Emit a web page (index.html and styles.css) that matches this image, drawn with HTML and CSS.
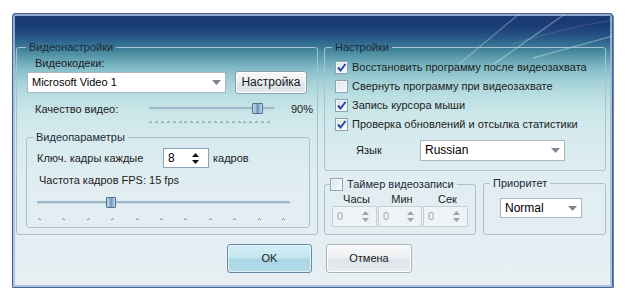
FILE: index.html
```html
<!DOCTYPE html>
<html>
<head>
<meta charset="utf-8">
<link rel="stylesheet" href="styles.css">
</head>
<body>
<div class="window">
  <svg class="glare" width="600" height="90" viewBox="0 0 600 90">
    <path d="M446 50 L506 0" stroke="rgba(255,255,255,0.26)" stroke-width="1.5" fill="none"/>
    <path d="M478 52 L552 0" stroke="rgba(255,255,255,0.32)" stroke-width="1.5" fill="none"/>
    <path d="M520 44 Q560 33 600 22" stroke="rgba(255,255,255,0.3)" stroke-width="1.5" fill="none"/>
    <path d="M500 30 Q550 14 600 6" stroke="rgba(255,255,255,0.14)" stroke-width="1" fill="none"/>
  </svg>
  <div class="groups">
    <fieldset class="group video">
      <legend>Видеонастройки</legend>
      <div class="codec-label">Видеокодеки:</div>
      <div class="codec-row">
        <div class="combo codec-combo"><span>Microsoft Video 1</span><svg class="arrow" width="9" height="5"><path d="M0 0H9L4.5 5Z" fill="#7b8894"/></svg></div>
        <button class="btn setup">Настройка</button>
      </div>
      <div class="quality-row">
        <span>Качество видео:</span>
        <div class="slider">
          <div class="track"></div>
          <div class="thumb quality-thumb"></div>
        </div>
        <span class="pct">90%</span>
      </div>
      <svg class="ticks quality-ticks" width="124" height="3">
        <path fill="#7e8e9c" d="M0 2h1v1h-1zm1 -1h1v1h-1zm1 1h1v1h-1z M6 2h1v1h-1zm1 -1h1v1h-1zm1 1h1v1h-1z M12 2h1v1h-1zm1 -1h1v1h-1zm1 1h1v1h-1z M18 2h1v1h-1zm1 -1h1v1h-1zm1 1h1v1h-1z M24 2h1v1h-1zm1 -1h1v1h-1zm1 1h1v1h-1z M30 2h1v1h-1zm1 -1h1v1h-1zm1 1h1v1h-1z M35 2h1v1h-1zm1 -1h1v1h-1zm1 1h1v1h-1z M41 2h1v1h-1zm1 -1h1v1h-1zm1 1h1v1h-1z M47 2h1v1h-1zm1 -1h1v1h-1zm1 1h1v1h-1z M53 2h1v1h-1zm1 -1h1v1h-1zm1 1h1v1h-1z M59 2h1v1h-1zm1 -1h1v1h-1zm1 1h1v1h-1z M65 2h1v1h-1zm1 -1h1v1h-1zm1 1h1v1h-1z M71 2h1v1h-1zm1 -1h1v1h-1zm1 1h1v1h-1z M77 2h1v1h-1zm1 -1h1v1h-1zm1 1h1v1h-1z M83 2h1v1h-1zm1 -1h1v1h-1zm1 1h1v1h-1z M89 2h1v1h-1zm1 -1h1v1h-1zm1 1h1v1h-1z M94 2h1v1h-1zm1 -1h1v1h-1zm1 1h1v1h-1z M100 2h1v1h-1zm1 -1h1v1h-1zm1 1h1v1h-1z M106 2h1v1h-1zm1 -1h1v1h-1zm1 1h1v1h-1z M112 2h1v1h-1zm1 -1h1v1h-1zm1 1h1v1h-1z M118 2h1v1h-1zm1 -1h1v1h-1zm1 1h1v1h-1z"/>
      </svg>
      <fieldset class="group params">
        <legend>Видеопараметры</legend>
        <div class="key-row">
          <span class="key-label">Ключ. кадры каждые</span>
          <div class="spin"><span>8</span><svg class="spin-arrows" width="7" height="11"><path d="M0 4L3.5 0L7 4Z M0 7H7L3.5 11Z" fill="#111"/></svg></div>
          <span class="unit">кадров</span>
        </div>
        <div class="fps-label">Частота кадров FPS: 15 fps</div>
        <div class="slider fps-slider">
          <div class="track"></div>
          <div class="thumb fps-thumb"></div>
        </div>
        <svg class="ticks fps-ticks" width="248" height="3">
          <path fill="#7e8e9c" d="M0 2h1v1h-1zm1 -1h1v1h-1zm1 1h1v1h-1z M24 2h1v1h-1zm1 -1h1v1h-1zm1 1h1v1h-1z M49 2h1v1h-1zm1 -1h1v1h-1zm1 1h1v1h-1z M73 2h1v1h-1zm1 -1h1v1h-1zm1 1h1v1h-1z M98 2h1v1h-1zm1 -1h1v1h-1zm1 1h1v1h-1z M122 2h1v1h-1zm1 -1h1v1h-1zm1 1h1v1h-1z M146 2h1v1h-1zm1 -1h1v1h-1zm1 1h1v1h-1z M171 2h1v1h-1zm1 -1h1v1h-1zm1 1h1v1h-1z M195 2h1v1h-1zm1 -1h1v1h-1zm1 1h1v1h-1z M220 2h1v1h-1zm1 -1h1v1h-1zm1 1h1v1h-1z M244 2h1v1h-1zm1 -1h1v1h-1zm1 1h1v1h-1z"/>
        </svg>
      </fieldset>
    </fieldset>

    <div class="right">
      <fieldset class="group settings">
        <legend>Настройки</legend>
        <div class="checks">
          <div class="check-row"><span class="checkbox"><svg width="11" height="11"><path d="M2 5.5L4.5 8.5L9.5 2" stroke="#2346a8" stroke-width="2" fill="none"/></svg></span><span>Восстановить программу после видеозахвата</span></div>
          <div class="check-row"><span class="checkbox"></span><span>Свернуть программу при видеозахвате</span></div>
          <div class="check-row"><span class="checkbox"><svg width="11" height="11"><path d="M2 5.5L4.5 8.5L9.5 2" stroke="#2346a8" stroke-width="2" fill="none"/></svg></span><span>Запись курсора мыши</span></div>
          <div class="check-row"><span class="checkbox"><svg width="11" height="11"><path d="M2 5.5L4.5 8.5L9.5 2" stroke="#2346a8" stroke-width="2" fill="none"/></svg></span><span>Проверка обновлений и отсылка статистики</span></div>
        </div>
        <div class="lang-row">
          <span>Язык</span>
          <div class="combo lang-combo"><span>Russian</span><svg class="arrow" width="9" height="5"><path d="M0 0H9L4.5 5Z" fill="#7b8894"/></svg></div>
        </div>
      </fieldset>
      <div class="bottom-groups">
        <fieldset class="group timer">
          <legend><span class="checkbox"></span><span>Таймер видеозаписи</span></legend>
          <div class="time-labels"><span>Часы</span><span>Мин</span><span>Сек</span></div>
          <div class="time-spins">
            <div class="spin disabled"><span>0</span><svg class="spin-arrows" width="7" height="11"><path d="M0 4L3.5 0L7 4Z M0 7H7L3.5 11Z" fill="#98a4ae"/></svg></div>
            <div class="spin disabled"><span>0</span><svg class="spin-arrows" width="7" height="11"><path d="M0 4L3.5 0L7 4Z M0 7H7L3.5 11Z" fill="#98a4ae"/></svg></div>
            <div class="spin disabled"><span>0</span><svg class="spin-arrows" width="7" height="11"><path d="M0 4L3.5 0L7 4Z M0 7H7L3.5 11Z" fill="#98a4ae"/></svg></div>
          </div>
        </fieldset>
        <fieldset class="group priority">
          <legend>Приоритет</legend>
          <div class="combo prio-combo"><span>Normal</span><svg class="arrow" width="9" height="5"><path d="M0 0H9L4.5 5Z" fill="#7b8894"/></svg></div>
        </fieldset>
      </div>
    </div>
  </div>
  <div class="buttons">
    <button class="btn ok">OK</button>
    <button class="btn cancel">Отмена</button>
  </div>
</div>
</body>
</html>
```

FILE: styles.css
```css
* { box-sizing: border-box; }

body {
  margin: 0;
  background: #ffffff;
  font: 11px/13px "Liberation Sans", Arial, sans-serif;
  color: #1c1c1c;
}

.window {
  position: relative;
  margin: 13px 0 0 12px;
  width: 601px;
  height: 275px;
  border: 1px solid #425f98;
  border-radius: 3px 3px 1px 1px;
  box-shadow: inset 0 0 0 2px rgba(165, 188, 216, 0.85), 1px 1px 0 #6d86b2;
  padding: 27px 6px 0 3px;
  overflow: hidden;
  background: linear-gradient(180deg,
    #1a3872 0px, #1c3d77 12px, #245182 21px, #316b90 29px,
    #45869d 37px, #62a1b1 45px, #84bdc7 55px, #a2d0d6 67px,
    #bbdfe2 82px, #cce6e9 100px, #d8ebef 130px, #e1edf1 170px, #e7eff3 273px);
}

.glare {
  position: absolute;
  left: 0;
  top: 0;
  pointer-events: none;
}

.groups {
  position: relative;
  display: grid;
  grid-template-columns: 302px 282px;
  column-gap: 6px;
  height: 194px;
}

.group {
  margin: 0;
  padding: 0;
  min-width: 0;
  border: 1px solid #a7c3cf;
  border-radius: 3px;
}

.group > legend {
  margin-left: 9px;
  padding: 0 3px;
  line-height: 13px;
  color: #1c2a3a;
}

/* left group */
.video { height: 194px; }

.codec-label { margin: 3px 0 0 18px; }

.codec-row {
  display: flex;
  align-items: center;
  height: 23px;
  margin: 1px 0 0 10px;
}

.combo {
  display: flex;
  align-items: center;
  justify-content: space-between;
  background: #ffffff;
  border: 1px solid #a9b7c3;
  padding: 0 4px 0 4px;
  color: #000;
}

.codec-combo { width: 199px; height: 21px; }

.btn {
  font: inherit;
  color: #1a1a1a;
  padding: 0;
  border-radius: 3px;
  cursor: default;
}

.setup {
  margin-left: 9px;
  width: 72px;
  height: 23px;
  border: 1px solid #8e9da9;
  box-shadow: inset 0 0 0 1px #ffffff;
  background: linear-gradient(180deg, #f6f8f9 0%, #edf0f2 50%, #dde3e7 55%, #e3e8eb 100%);
  font-size: 12px;
}

.quality-row {
  display: grid;
  grid-template-columns: 114px 125px 1fr;
  align-items: center;
  height: 14px;
  margin: 8px 4px 0 18px;
}

.pct { text-align: right; }

.slider {
  position: relative;
  height: 14px;
  padding-top: 5px;
}

.track {
  height: 3px;
  background: #9db8c8;
  border-bottom: 1px solid #c9dce4;
}

.thumb {
  position: absolute;
  top: 1px;
  width: 11px;
  height: 11px;
  border: 1px solid #4f7398;
  border-radius: 1px;
  background: linear-gradient(90deg, #b9d0e2 0%, #a3bfd6 30%, #6d90b2 50%, #8eaecb 70%, #c8dae8 100%);
}

.quality-thumb { left: 103px; }

.ticks { display: block; }

.quality-ticks { margin: 4px 0 0 132px; }

/* video parameters */
.params {
  height: 97px;
  margin: 8px 7px 0 9px;
}

.params > legend { margin-left: 6px; }

.key-row {
  display: flex;
  align-items: center;
  height: 20px;
  margin: 4px 0 0 10px;
}

.key-label { width: 126px; }

.spin {
  display: flex;
  align-items: center;
  justify-content: space-between;
  background: #ffffff;
  border: 1px solid #8aa3b8;
  padding: 0 9px 0 4px;
  color: #000;
}

.key-row .spin { width: 46px; height: 20px; font-size: 12px; }

.unit { margin-left: 4px; }

.fps-label { margin: 6px 0 0 12px; }

.fps-slider {
  width: 253px;
  height: 12px;
  margin: 10px 0 0 10px;
  padding-top: 4px;
}

.fps-thumb { left: 69px; top: 0; height: 11px; width: 10px; }

.fps-ticks { margin: 8px 0 0 11px; }

/* right column */
.right {
  display: flex;
  flex-direction: column;
  gap: 6px;
}

.settings { height: 130px; }

.settings > legend { margin-left: 7px; }

.checks { margin: 4px 0 0 10px; }

.check-row {
  display: flex;
  align-items: center;
  gap: 4px;
  height: 19px;
}

.checkbox {
  display: inline-flex;
  align-items: center;
  justify-content: center;
  width: 13px;
  height: 13px;
  border: 1px solid #8fa3b6;
  background: linear-gradient(135deg, #d9e1e8 0%, #eef2f5 60%, #ffffff 100%);
  box-shadow: inset 0 0 0 1px #f4f7f9;
}

.lang-row {
  display: grid;
  grid-template-columns: 64px 145px;
  align-items: center;
  height: 21px;
  margin: 6px 0 0 31px;
}

.lang-combo { height: 21px; font-size: 12px; }

.bottom-groups {
  display: flex;
  gap: 7px;
  height: 58px;
}

.timer { width: 152px; height: 58px; }

.timer > legend {
  display: flex;
  align-items: center;
  gap: 4px;
  margin-left: 5px;
  padding: 0 3px 0 0;
  height: 14px;
}

.time-labels,
.time-spins {
  display: grid;
  grid-template-columns: 45px 44px 45px;
  column-gap: 1px;
  margin-left: 7px;
}

.time-labels { margin-top: 2px; }

.time-labels span { text-align: center; padding-left: 4px; }

.time-spins .spin { height: 21px; }

.spin.disabled {
  background: #eef3f5;
  border-color: #c6d0d8;
  color: #a0a9b1;
  padding-right: 7px;
}

.priority { width: 123px; height: 58px; }

.priority > legend { margin-left: 6px; }

.prio-combo {
  width: 82px;
  height: 20px;
  margin: 8px 0 0 16px;
  font-size: 12px;
}

/* buttons */
.buttons {
  display: flex;
  gap: 14px;
  margin: 9px 0 0 211px;
}

.ok,
.cancel {
  height: 29px;
}

.ok {
  width: 85px;
  border: 1px solid #6a8ca8;
  box-shadow: inset 0 0 0 1px #dff3f8;
  background: linear-gradient(180deg, #d2eef4 0%, #c3e6ef 48%, #abd6e6 52%, #b3dbe9 100%);
}

.cancel {
  width: 86px;
  border: 1px solid #a8b3bc;
  box-shadow: inset 0 0 0 1px #ffffff;
  background: linear-gradient(180deg, #f7f8f9 0%, #eef1f3 48%, #dfe5ea 52%, #e6ebef 100%);
}
```
